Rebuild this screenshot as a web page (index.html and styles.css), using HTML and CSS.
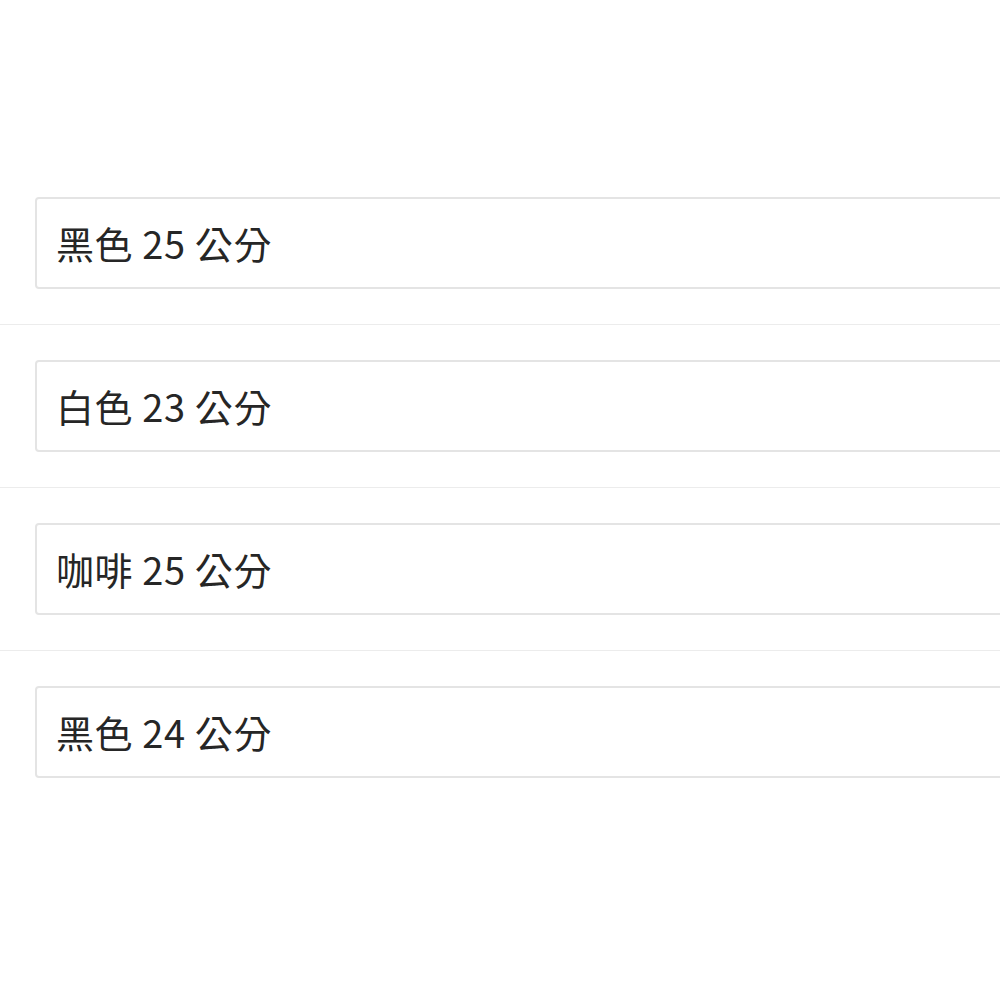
FILE: index.html
```html
<!DOCTYPE html>
<html lang="zh-Hant">
<head>
    <meta charset="UTF-8">
    <meta name="viewport" content="width=device-width, initial-scale=1.0">
    <title>規格選項</title>
    <link rel="stylesheet" href="styles.css">
</head>
<body>

    <!-- Option list -->
    <div class="option-list">
        <div class="option-row">
            <div class="option-field">黑色 25 公分</div>
        </div>
        <div class="option-row">
            <div class="option-field">白色 23 公分</div>
        </div>
        <div class="option-row">
            <div class="option-field">咖啡 25 公分</div>
        </div>
        <div class="option-row">
            <div class="option-field">黑色 24 公分</div>
        </div>
    </div>

</body>
</html>
```

FILE: styles.css
```css
/* Basic reset */
body, html {
    margin: 0;
    padding: 0;
    height: 100%;
    background-color: #ffffff;
    font-family: "Noto Sans CJK TC", "Noto Sans", sans-serif;
    color: #262626;
    overflow: hidden;
}

.option-list {
    padding-top: 162px;
    overflow: hidden;
}

/* Each row, separated by a thin line */
.option-row {
    padding: 35px 0 35px 35px;
    border-bottom: 1px solid #ececec;
}
.option-row:last-child {
    border-bottom: none;
}

/* The field runs past the right edge */
.option-field {
    display: flex;
    align-items: center;
    box-sizing: border-box;
    height: 92px;
    margin-right: -20px;
    padding: 0 20px 0 19px;
    border: 2px solid #e4e4e4;
    border-radius: 4px;
    font-size: 38px;
    letter-spacing: 0.6px;
    line-height: 1;
}
```
